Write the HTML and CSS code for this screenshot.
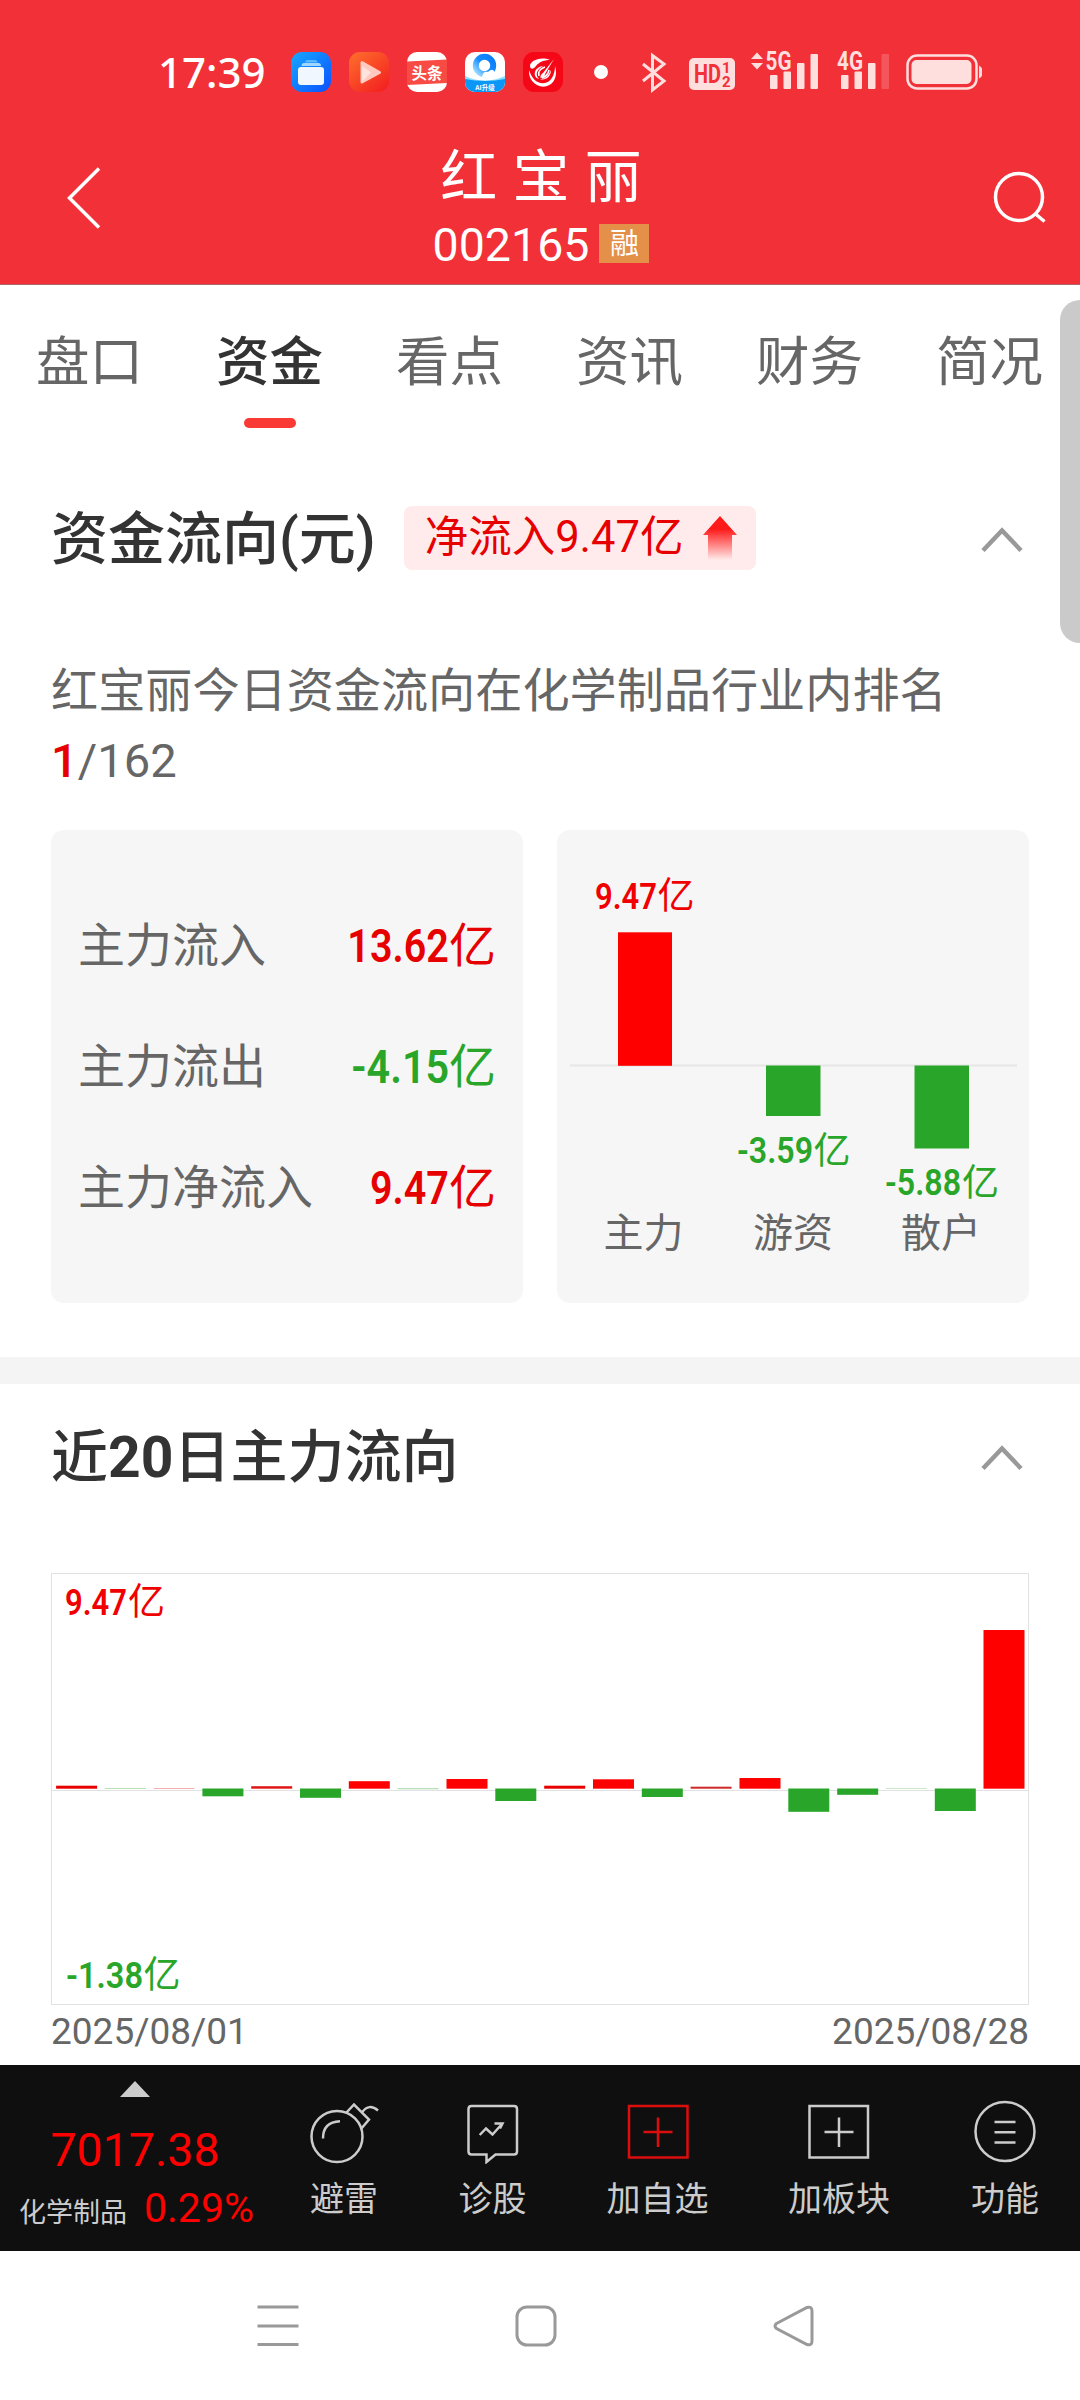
FILE: index.html
```html
<!DOCTYPE html>
<html lang="zh-CN">
<head>
<meta charset="utf-8">
<title>红宝丽 002165</title>
<link rel="stylesheet" href="styles.css">
</head>
<body>
<header class="top">
  <div class="status">
    <span class="clock">17:39</span>
    <div class="apps">
      <svg width="40" height="40" viewBox="0 0 40 40">
        <defs><linearGradient id="blue" x1="0" y1="0" x2="1" y2="1"><stop offset="0" stop-color="#17a8ff"/><stop offset="1" stop-color="#0a50ff"/></linearGradient></defs>
        <rect width="40" height="40" rx="11" fill="url(#blue)"/>
        <path d="M14 10.500Q14 8 16.500 8H24Q26.500 8 26.500 10.500Z" fill="#5cb8ff"/>
        <path d="M10.500 14Q10.500 11 13 11H27.500Q30 11 30 14Z" fill="#a3d6ff"/>
        <rect x="7" y="15" width="26" height="18" rx="3" fill="#f0f7ff"/>
      </svg>
      <svg width="40" height="40" viewBox="0 0 40 40">
        <defs><linearGradient id="orange" x1="0" y1="0" x2=".8" y2="1"><stop offset="0" stop-color="#ff702c"/><stop offset="1" stop-color="#f32321"/></linearGradient></defs>
        <rect width="40" height="40" rx="11" fill="url(#orange)"/>
        <path d="M13 10.500L30.500 20.500L13 30Z" fill="#ffc9bf" stroke="#ffc9bf" stroke-width="3" stroke-linejoin="round"/>
        <path d="M13 14L22 20.500L13 30Z" fill="#ffe3dc"/>
      </svg>
      <svg width="40" height="40" viewBox="0 0 40 40">
        <rect width="40" height="40" rx="10" fill="#fff"/>
        <path d="M0 9.500L40 7.500V31L0 33Z" fill="#f84b44"/>
        <text x="20" y="26.500" text-anchor="middle" class="cjk app-name">头条</text>
      </svg>
      <svg width="40" height="40" viewBox="0 0 40 40">
        <defs>
          <clipPath id="tile"><rect width="40" height="40" rx="10"/></clipPath>
          <linearGradient id="ring" x1="0" y1="1" x2="1" y2="0"><stop offset="0" stop-color="#a7e3ff"/><stop offset=".5" stop-color="#168cff"/><stop offset="1" stop-color="#087cf8"/></linearGradient>
        </defs>
        <g clip-path="url(#tile)">
          <rect width="40" height="40" fill="#fff"/>
          <path d="M0 24Q20 33 40 24V40H0Z" fill="#8be0fb"/>
          <path d="M0 27Q20 31 40 27V40H0Z" fill="#0b97f5"/>
          <circle cx="19.500" cy="13.500" r="8.700" fill="none" stroke="url(#ring)" stroke-width="6"/>
          <path d="M17 25Q18 19 23 20Q28 15 30 21Q34 25 28 25Z" fill="#fff"/>
        </g>
        <text x="20" y="37.500" text-anchor="middle" class="cjk app-tag">AI升级</text>
      </svg>
      <svg width="40" height="40" viewBox="0 0 40 40">
        <rect width="40" height="40" rx="11" fill="#f60718"/>
        <path d="M27 8C17 4 7 9 7 14C7 17 10 18 13 14C16 10 21 8 27 8Z" fill="#fff"/>
        <path d="M6 18C5 29 15 37 24 34C31 32 35 24 32 14C32 23 28 30 22 31C14 32 9 27 6 18Z" fill="#fff"/>
        <path d="M20 14C11 15 9 25 16 27C11 22 15 17 20 14ZM28 18C28 25 22 29 17 27C24 27 26 22 28 18Z" fill="#fff"/>
        <path d="M31 7L20 21Q17 23 17.500 26Q22 25 22 22Z" fill="#fff"/>
        <path d="M16 24Q14 18 22 15M19 26Q25 24 26 18" fill="none" stroke="#fff" stroke-width="1.600"/>
      </svg>
    </div>
    <svg class="signals" width="400" height="46" viewBox="590 49 400 46">
      <circle cx="601" cy="72" r="7" fill="#fff"/>
      <path d="M643 64L664 81L652.500 90V55.500L664 64L643 81" fill="none" stroke="#ffdede" stroke-width="3"/>
      <rect x="689" y="58" width="46" height="32" rx="5" fill="#ffdede"/>
      <text x="694" y="82.500" class="hd" textLength="27" lengthAdjust="spacingAndGlyphs">HD</text>
      <text x="722" y="73" class="hd-sub">1</text>
      <text x="722" y="86.500" class="hd-sub">2</text>
      <g fill="#ffdede">
        <path d="M751 59L757 52.500L763 59ZM751 63L757 69.500L763 63Z"/>
        <text x="765.500" y="70" class="net" textLength="26" lengthAdjust="spacingAndGlyphs">5G</text>
        <rect x="770" y="75" width="7.500" height="14" rx="1"/><rect x="783.500" y="71.500" width="7.500" height="17.500" rx="1"/><rect x="797" y="63" width="7.500" height="26" rx="1"/><rect x="810.500" y="54" width="7.500" height="35" rx="1"/>
        <text x="837" y="70" class="net" textLength="26" lengthAdjust="spacingAndGlyphs">4G</text>
        <rect x="841" y="75" width="7.500" height="14" rx="1"/><rect x="854.500" y="71.500" width="7.500" height="17.500" rx="1"/><rect x="868" y="63" width="7.500" height="26" rx="1"/><rect x="881.500" y="54" width="7.500" height="35" rx="1" opacity=".22"/>
        <rect x="911.500" y="60" width="60" height="24" rx="5"/>
        <path d="M979 65.500Q982 67 982 69V75Q982 77 979 78.500Z"/>
      </g>
      <rect x="907.500" y="55.500" width="69" height="33" rx="9.500" fill="none" stroke="#ffdede" stroke-width="2.500"/>
    </svg>
  </div>
  <div class="titlebar">
    <svg class="back" width="40" height="70" viewBox="0 0 40 70"><path d="M34 5.500L4.500 35L34 64.500" fill="none" stroke="#fff" stroke-width="3.500"/></svg>
    <div class="stock">
      <div class="name">红 宝 丽</div>
      <div class="code"><span>002165</span><span class="margin-tag">融</span></div>
    </div>
    <svg class="search" width="56" height="56" viewBox="0 0 56 56"><circle cx="28" cy="27" r="23.500" fill="none" stroke="#fff" stroke-width="3.500"/><path d="M44 43.500L53.500 51.500" stroke="#fff" stroke-width="3.500"/></svg>
  </div>
</header>

<main class="content">
  <nav class="tabs">
    <a>盘口</a><a class="active">资金</a><a>看点</a><a>资讯</a><a>财务</a><a>简况</a>
  </nav>
  <div class="scroll-thumb"></div>

  <section class="flow">
    <div class="heading">
      <h2>资金流向(元)</h2>
      <div class="net-badge">净流入9.47亿
        <svg width="36" height="44" viewBox="0 0 36 44">
          <defs><linearGradient id="fade" x1="0" y1="0" x2="0" y2="1"><stop offset=".3" stop-color="#ff1a1a"/><stop offset="1" stop-color="#ff1a1a" stop-opacity="0"/></linearGradient></defs>
          <path d="M18 0L35 19H30V44H6V19H1Z" fill="url(#fade)"/>
        </svg>
      </div>
      <svg class="chevron" width="44" height="28" viewBox="0 0 44 28"><path d="M3 24.500L22 4.500L41 24.500" fill="none" stroke="#999" stroke-width="4.500"/></svg>
    </div>
    <p class="rank">红宝丽今日资金流向在化学制品行业内排名<br><b>1</b>/162</p>
    <div class="cards">
      <div class="card figures">
        <div class="row"><span>主力流入</span><span class="amount up"><i>13.62</i>亿</span></div>
        <div class="row"><span>主力流出</span><span class="amount down"><i>-4.15</i>亿</span></div>
        <div class="row"><span>主力净流入</span><span class="amount up"><i>9.47</i>亿</span></div>
      </div>
      <div class="card">
        <svg width="472" height="473" viewBox="557 830 472 473">
          <path d="M570 1065.500H1017" stroke="#e6e6e6" stroke-width="2"/>
          <rect x="618" y="932.300" width="54" height="133.500" fill="#f00"/>
          <rect x="766" y="1065.500" width="54.500" height="50.500" fill="#29a629"/>
          <rect x="914.500" y="1065.500" width="54.500" height="83" fill="#29a629"/>
          <g class="up"><text class="din" x="595" y="908.500" textLength="62" lengthAdjust="spacingAndGlyphs">9.47</text><text class="unit" x="657.500" y="909">亿</text></g>
          <g class="down"><text class="din" x="737" y="1163" textLength="76" lengthAdjust="spacingAndGlyphs">-3.59</text><text class="unit" x="813.500" y="1163.500">亿</text></g>
          <g class="down"><text class="din" x="885" y="1195" textLength="76" lengthAdjust="spacingAndGlyphs">-5.88</text><text class="unit" x="962" y="1195.500">亿</text></g>
          <g class="who"><text x="643.500" y="1247">主力</text><text x="793" y="1247">游资</text><text x="941" y="1247">散户</text></g>
        </svg>
      </div>
    </div>
  </section>

  <section class="history">
    <div class="heading">
      <h2>近<b>20</b>日主力流向</h2>
      <svg class="chevron" width="44" height="28" viewBox="0 0 44 28"><path d="M3 24.500L22 4.500L41 24.500" fill="none" stroke="#999" stroke-width="4.500"/></svg>
    </div>
    <svg class="chart" width="978" height="432" viewBox="51 1573 978 432">
      <rect x="51.500" y="1573.500" width="977" height="431" fill="none" stroke="#e2e2e2"/>
      <path d="M51 1790.500H1029" stroke="#e2e2e2"/>
      <g fill="#f00">
        <rect x="56.100" y="1785.700" width="41" height="3" fill="#e60000"/>
        <rect x="153.600" y="1788" width="41" height="1" fill="#f3b0b0"/>
        <rect x="251.200" y="1786.200" width="41" height="2.500" fill="#df1818"/>
        <rect x="348.800" y="1781.200" width="41" height="7.500"/>
        <rect x="446.500" y="1779" width="41" height="9.700"/>
        <rect x="544.200" y="1785.700" width="41" height="3" fill="#e60000"/>
        <rect x="593" y="1779.300" width="41" height="9.400"/>
        <rect x="690.600" y="1786.700" width="41" height="2" fill="#cf2828"/>
        <rect x="739.500" y="1778" width="41" height="10.700"/>
        <rect x="983.500" y="1630" width="41" height="158.700"/>
      </g>
      <g fill="#29a629">
        <rect x="104.900" y="1788" width="41" height="1" fill="#b9dfb9"/>
        <rect x="202.400" y="1788.500" width="41" height="7.800"/>
        <rect x="300" y="1788.500" width="41" height="9.300"/>
        <rect x="397.600" y="1788" width="41" height="1.300" fill="#b9dfb9"/>
        <rect x="495.300" y="1788.500" width="41" height="12.500"/>
        <rect x="641.800" y="1788.500" width="41" height="8.500"/>
        <rect x="788.300" y="1788.500" width="41" height="23.300"/>
        <rect x="837.200" y="1788.500" width="41" height="6.300"/>
        <rect x="886" y="1788" width="41" height="1" fill="#cbe8cb"/>
        <rect x="934.800" y="1788.500" width="41" height="22.500"/>
      </g>
      <g class="up"><text class="din" x="65" y="1614.500" textLength="62" lengthAdjust="spacingAndGlyphs">9.47</text><text class="unit" x="128" y="1615">亿</text></g>
      <g class="down"><text class="din" x="66" y="1987.500" textLength="77" lengthAdjust="spacingAndGlyphs">-1.38</text><text class="unit" x="143.500" y="1988">亿</text></g>
    </svg>
    <div class="dates"><span>2025/08/01</span><span>2025/08/28</span></div>
  </section>
</main>

<footer class="toolbar">
  <div class="index">
    <svg width="30" height="16" viewBox="0 0 30 16"><path d="M0 16L15 0L30 16Z" fill="#ccc"/></svg>
    <div class="points">7017.38</div>
    <div class="sector"><span>化学制品</span><span class="pct">0.29%</span></div>
  </div>
  <div class="tool bomb">
    <svg width="70" height="64" viewBox="309 2100 70 64"><circle cx="337" cy="2136.500" r="25.500"/><path d="M323 2138.500Q323 2122 340 2121.300M346 2113L354 2104.500L369 2119.500L361 2129M362.300 2112Q369 2103 378 2110.500"/></svg>
    <span>避雷</span>
  </div>
  <div class="tool diagnose">
    <svg width="70" height="64" viewBox="457 2100 70 64"><path d="M470.500 2106H513Q516 2106 516 2109V2151.500Q516 2154.500 513 2154.500H494.500L485.500 2162V2154.500H470.500Q467.500 2154.500 467.500 2151.500V2109Q467.500 2106 470.500 2106ZM478.700 2135L485 2128.500L491.500 2134.500L501 2124M493.500 2123.500H501.500L499 2128.500"/></svg>
    <span>诊股</span>
  </div>
  <div class="tool watch">
    <svg class="hot" width="70" height="64" viewBox="623.500 2100 70 64"><rect x="629.500" y="2106" width="58.500" height="51.500"/><path d="M644 2132H673M658.500 2117.500V2147"/></svg>
    <span>加自选</span>
  </div>
  <div class="tool board">
    <svg width="70" height="64" viewBox="804.500 2100 70 64"><rect x="810" y="2106" width="58.500" height="51.500"/><path d="M825 2132H854M839.500 2117.500V2147"/></svg>
    <span>加板块</span>
  </div>
  <div class="tool more">
    <svg width="70" height="64" viewBox="969.500 2100 70 64"><circle cx="1004.500" cy="2131.500" r="29.500"/><path d="M994 2122H1015M994 2132.300H1015M994 2142.500H1015"/></svg>
    <span>功能</span>
  </div>
</footer>

<nav class="system">
  <svg width="42" height="42" viewBox="0 0 42 42"><path d="M0.500 2H41.500M0.500 21H41.500M0.500 39.500H41.500"/></svg>
  <svg width="42" height="42" viewBox="0 0 42 42"><rect x="2" y="2" width="38" height="38" rx="10"/></svg>
  <svg width="42" height="42" viewBox="0 0 42 42"><path d="M3.500 18.500L34 2.500Q39 1 39 6V36Q39 41 34 39.500L3.500 23.500Q0.500 21 3.500 18.500Z"/></svg>
</nav>
</body>
</html>
```
FILE: styles.css
```css
* { box-sizing: border-box; margin: 0; padding: 0; }
body {
  width: 1080px; height: 2400px; overflow: hidden; background: #fff; color: #666;
  font-family: Roboto, "Noto Sans CJK SC", sans-serif;
  display: flex; flex-direction: column;
}
svg { display: block; flex: none; }
.up { color: #e60000; fill: #f00000; }
.down { color: #29a629; fill: #29a629; }

.top { height: 285px; flex: none; background: #f23038; color: #fff; border-bottom: 1px solid #b06468; }
.status { display: flex; align-items: center; height: 144px; padding-left: 158px; }
.clock { width: 133px; font: 500 42px/60px "Noto Sans", sans-serif; }
.apps { display: flex; gap: 18px; }
.signals { margin-left: 27px; }
.cjk { font-family: "Noto Sans CJK SC", sans-serif; fill: #fff; font-weight: 700; }
.app-name { font-size: 15.500px; }
.app-tag { font-size: 6.500px; }
.hd { font: 700 25px Roboto, sans-serif; fill: #f23038; }
.hd-sub { font: 700 15px Roboto, sans-serif; fill: #f23038; }
.net { font: 700 25px Roboto, sans-serif; }
.titlebar { display: flex; justify-content: space-between; height: 141px; padding: 0 33px 0 65px; }
.back { margin-top: 19px; }
.search { margin-top: 26px; }
.stock { width: 400px; margin-left: -14px; }
.name { font-size: 57px; line-height: 68px; word-spacing: 1px; text-align: center; }
.code { display: flex; justify-content: center; gap: 10px; font-size: 46.500px; line-height: 42px; padding-top: 12px; }
.margin-tag { width: 50px; height: 39px; background: #e59049; font-size: 29px; line-height: 41px; text-align: center; }

.content { height: 1780px; flex: none; position: relative; }
.tabs { display: grid; grid-template-columns: repeat(6, 180px); height: 159px; padding-top: 39px; text-align: center; font-size: 53.500px; line-height: 78px; }
.tabs a { margin-left: -1px; }
.tabs .active { color: #333; font-weight: 500; }
.tabs .active::after { content: ""; display: block; width: 52px; height: 10px; margin: 16px auto 0; border-radius: 5px; background: #fa3a34; }
.scroll-thumb { position: absolute; right: 0; top: 15px; width: 20px; height: 343px; border-radius: 20px 0 0 20px; background: #cacaca; }

.heading { display: flex; align-items: center; padding: 0 56px 0 51px; }
.heading h2 { font-size: 57px; font-weight: 500; color: #333; line-height: 80px; white-space: nowrap; }
.heading h2 b { font-weight: 700; }
.chevron { margin-left: auto; }
.flow { height: 913px; padding-top: 56px; }
.net-badge { display: flex; align-items: center; justify-content: space-between; width: 352px; height: 64px; margin: -4px 0 0 28px; padding: 0 18px 0 21px; border-radius: 8px; background: #ffebeb; color: #e60000; font-size: 43.500px; line-height: 64px; white-space: nowrap; }
.rank { padding: 76px 51px 0; font-size: 47.150px; line-height: 70px; white-space: nowrap; }
.rank b { font-weight: 500; color: #e60000; }
.cards { display: flex; justify-content: space-between; padding: 34px 51px 0; }
.card { width: 472px; height: 473px; border-radius: 13px; background: #f6f6f6; overflow: hidden; }
.figures { display: flex; flex-direction: column; padding: 55px 27px 0 27px; }
.row { display: flex; justify-content: space-between; height: 121px; font-size: 47px; line-height: 121px; }
.amount i { display: inline-block; font-style: normal; font-weight: 600; transform: scaleX(.84); transform-origin: right; }
.amount.down i { transform: scaleX(.88); }
.din { font: 600 36.500px Roboto, sans-serif; }
.unit { font: 400 37px "Noto Sans CJK SC", sans-serif; }
.who { font: 400 40px "Noto Sans CJK SC", sans-serif; fill: #666; text-anchor: middle; }

.history { border-top: 27px solid #f4f4f4; padding-top: 34px; }
.chart { margin: 75px 0 0 51px; }
.dates { display: flex; justify-content: space-between; padding: 5px 51px 0; font-size: 37px; line-height: 44px; }

.toolbar { height: 186px; flex: none; background: #0f0f0f; color: #ccc; display: flex; }
.index { width: 270px; padding-top: 16px; display: flex; flex-direction: column; align-items: center; }
.points { margin-top: 25px; font-size: 46.500px; line-height: 56px; color: #f00; }
.sector { display: flex; align-items: baseline; align-self: flex-start; gap: 17px; padding-left: 19px; font-size: 27px; line-height: 60px; }
.sector .pct { font-size: 41px; color: #f00; }
.tool { display: flex; flex-direction: column; align-items: center; padding-top: 35px; font-size: 34px; line-height: 50px; white-space: nowrap; }
.tool svg { fill: none; stroke: #ccc; stroke-width: 2.500px; }
.tool svg.hot { stroke: #dc0d0d; }
.tool span { margin-top: 10px; }
.bomb { width: 148px; }
.diagnose { width: 149px; }
.watch { width: 181px; }
.board { width: 182px; }
.more { width: 150px; }

.system { height: 149px; display: flex; gap: 216px; align-items: flex-start; padding: 54px 0 0 257px; }
.system svg { fill: none; stroke: #999; stroke-width: 3px; }
```
